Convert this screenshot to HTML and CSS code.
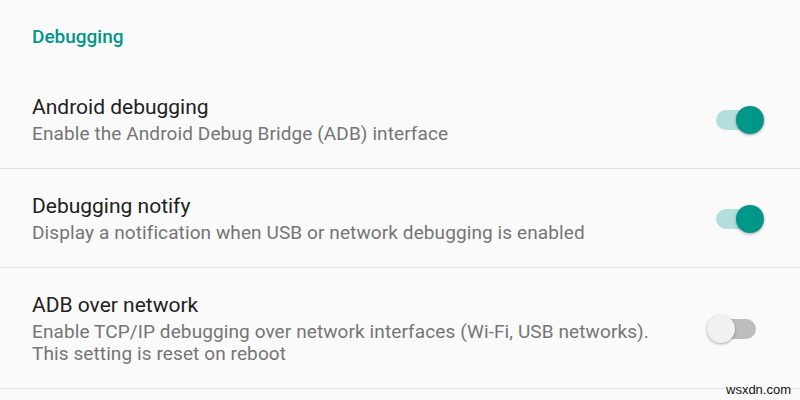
FILE: index.html
```html
<!DOCTYPE html>
<html lang="en">
<head>
    <meta charset="UTF-8">
    <meta name="viewport" content="width=device-width, initial-scale=1.0">
    <title>Debugging</title>
    <link rel="stylesheet" href="styles.css">
</head>
<body>
    <div class="settings">
        <div class="category">Debugging</div>

        <div class="pref">
            <div class="pref-text">
                <div class="pref-title">Android debugging</div>
                <div class="pref-summary">Enable the Android Debug Bridge (ADB) interface</div>
            </div>
            <div class="switch on"><span class="track"></span><span class="thumb"></span></div>
        </div>

        <div class="pref">
            <div class="pref-text">
                <div class="pref-title">Debugging notify</div>
                <div class="pref-summary">Display a notification when USB or network debugging is enabled</div>
            </div>
            <div class="switch on"><span class="track"></span><span class="thumb"></span></div>
        </div>

        <div class="pref">
            <div class="pref-text">
                <div class="pref-title">ADB over network</div>
                <div class="pref-summary">Enable TCP/IP debugging over network interfaces (Wi-Fi, USB networks).<br>This setting is reset on reboot</div>
            </div>
            <div class="switch"><span class="track"></span><span class="thumb"></span></div>
        </div>
    </div>
    <div class="watermark">wsxdn.com</div>
</body>
</html>
```

FILE: styles.css
```css
body {
    margin: 0;
    padding: 0;
    background-color: #fafafa;
    font-family: Roboto, "Noto Sans", sans-serif;
    overflow: hidden;
}
.settings {
    width: 800px;
}
.category {
    height: 70px;
    box-sizing: border-box;
    padding: 23px 32px 0;
    font-size: 19px;
    font-weight: 500;
    line-height: 28px;
    color: #009688;
}
.pref {
    display: flex;
    align-items: center;
    padding: 24px 36px 23px 32px;
    border-bottom: 1px solid #e0e0e0;
}
.pref-text {
    flex: 1;
}
.pref-title {
    font-size: 21px;
    line-height: 26px;
    color: #212121;
}
.pref-summary {
    margin-top: 3px;
    font-size: 19px;
    line-height: 22px;
    letter-spacing: 0.1px;
    color: #757575;
}
.switch {
    position: relative;
    width: 58px;
    height: 28px;
    flex-shrink: 0;
}
.switch .track {
    position: absolute;
    left: 10px;
    top: 4px;
    width: 40px;
    height: 20px;
    border-radius: 10px;
    background-color: #bdbdbd;
}
.switch .thumb {
    position: absolute;
    left: 1px;
    top: 0;
    width: 28px;
    height: 28px;
    border-radius: 50%;
    background-color: #f1f1f1;
    box-shadow: 0 1px 3px rgba(0,0,0,0.35);
}
.switch.on .track {
    background-color: #b2dfdb;
}
.switch.on .thumb {
    left: 30px;
    background-color: #009688;
}
.watermark {
    position: absolute;
    left: 724px;
    top: 382px;
    padding: 0 2px;
    background-color: #fafafa;
    font-family: "Liberation Sans", Arial, sans-serif;
    font-size: 13px;
    line-height: 15px;
    color: #111;
}
```
